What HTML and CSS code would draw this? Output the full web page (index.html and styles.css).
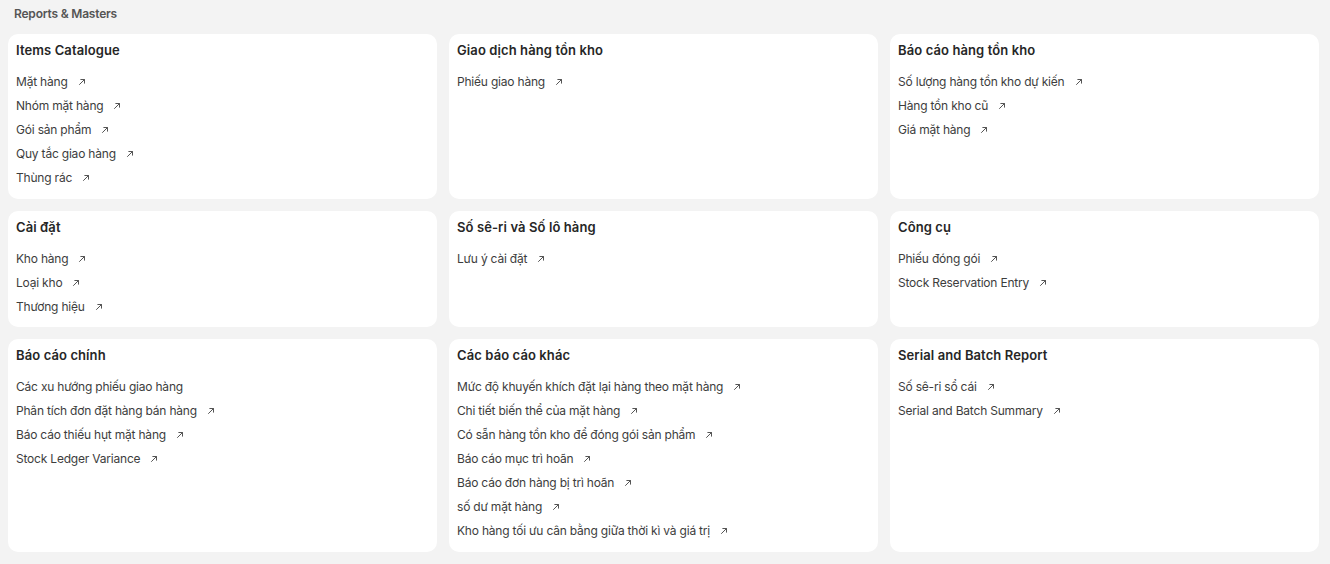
FILE: index.html
```html
<!DOCTYPE html>
<html lang="vi">
  <head>
    <meta charset="utf-8">
    <title>Reports &amp; Masters</title>
    <link rel="stylesheet" href="styles.css">
  </head>
  <body>
    <div class="section">
      <div class="section__title">Reports &amp; Masters</div>
      <div class="cards">
        <div class="card">
          <div class="card__title">Items Catalogue</div>
          <a class="link">Mặt hàng <svg class="arrow" viewBox="0 0 8 8"><path d="M1.5 6.5 L6.5 1.5 M2.8 1.5 H6.5 V5.2"/></svg></a>
          <a class="link">Nhóm mặt hàng <svg class="arrow" viewBox="0 0 8 8"><path d="M1.5 6.5 L6.5 1.5 M2.8 1.5 H6.5 V5.2"/></svg></a>
          <a class="link">Gói sản phẩm <svg class="arrow" viewBox="0 0 8 8"><path d="M1.5 6.5 L6.5 1.5 M2.8 1.5 H6.5 V5.2"/></svg></a>
          <a class="link">Quy tắc giao hàng <svg class="arrow" viewBox="0 0 8 8"><path d="M1.5 6.5 L6.5 1.5 M2.8 1.5 H6.5 V5.2"/></svg></a>
          <a class="link">Thùng rác <svg class="arrow" viewBox="0 0 8 8"><path d="M1.5 6.5 L6.5 1.5 M2.8 1.5 H6.5 V5.2"/></svg></a>
        </div>
        <div class="card">
          <div class="card__title">Giao dịch hàng tồn kho</div>
          <a class="link">Phiếu giao hàng <svg class="arrow" viewBox="0 0 8 8"><path d="M1.5 6.5 L6.5 1.5 M2.8 1.5 H6.5 V5.2"/></svg></a>
        </div>
        <div class="card">
          <div class="card__title">Báo cáo hàng tồn kho</div>
          <a class="link">Số lượng hàng tồn kho dự kiến <svg class="arrow" viewBox="0 0 8 8"><path d="M1.5 6.5 L6.5 1.5 M2.8 1.5 H6.5 V5.2"/></svg></a>
          <a class="link">Hàng tồn kho cũ <svg class="arrow" viewBox="0 0 8 8"><path d="M1.5 6.5 L6.5 1.5 M2.8 1.5 H6.5 V5.2"/></svg></a>
          <a class="link">Giá mặt hàng <svg class="arrow" viewBox="0 0 8 8"><path d="M1.5 6.5 L6.5 1.5 M2.8 1.5 H6.5 V5.2"/></svg></a>
        </div>
        <div class="card">
          <div class="card__title">Cài đặt</div>
          <a class="link">Kho hàng <svg class="arrow" viewBox="0 0 8 8"><path d="M1.5 6.5 L6.5 1.5 M2.8 1.5 H6.5 V5.2"/></svg></a>
          <a class="link">Loại kho <svg class="arrow" viewBox="0 0 8 8"><path d="M1.5 6.5 L6.5 1.5 M2.8 1.5 H6.5 V5.2"/></svg></a>
          <a class="link">Thương hiệu <svg class="arrow" viewBox="0 0 8 8"><path d="M1.5 6.5 L6.5 1.5 M2.8 1.5 H6.5 V5.2"/></svg></a>
        </div>
        <div class="card">
          <div class="card__title">Số sê-ri và Số lô hàng</div>
          <a class="link">Lưu ý cài đặt <svg class="arrow" viewBox="0 0 8 8"><path d="M1.5 6.5 L6.5 1.5 M2.8 1.5 H6.5 V5.2"/></svg></a>
        </div>
        <div class="card">
          <div class="card__title">Công cụ</div>
          <a class="link">Phiếu đóng gói <svg class="arrow" viewBox="0 0 8 8"><path d="M1.5 6.5 L6.5 1.5 M2.8 1.5 H6.5 V5.2"/></svg></a>
          <a class="link">Stock Reservation Entry <svg class="arrow" viewBox="0 0 8 8"><path d="M1.5 6.5 L6.5 1.5 M2.8 1.5 H6.5 V5.2"/></svg></a>
        </div>
        <div class="card">
          <div class="card__title">Báo cáo chính</div>
          <a class="link">Các xu hướng phiếu giao hàng</a>
          <a class="link">Phân tích đơn đặt hàng bán hàng <svg class="arrow" viewBox="0 0 8 8"><path d="M1.5 6.5 L6.5 1.5 M2.8 1.5 H6.5 V5.2"/></svg></a>
          <a class="link">Báo cáo thiếu hụt mặt hàng <svg class="arrow" viewBox="0 0 8 8"><path d="M1.5 6.5 L6.5 1.5 M2.8 1.5 H6.5 V5.2"/></svg></a>
          <a class="link">Stock Ledger Variance <svg class="arrow" viewBox="0 0 8 8"><path d="M1.5 6.5 L6.5 1.5 M2.8 1.5 H6.5 V5.2"/></svg></a>
        </div>
        <div class="card">
          <div class="card__title">Các báo cáo khác</div>
          <a class="link">Mức độ khuyến khích đặt lại hàng theo mặt hàng <svg class="arrow" viewBox="0 0 8 8"><path d="M1.5 6.5 L6.5 1.5 M2.8 1.5 H6.5 V5.2"/></svg></a>
          <a class="link">Chi tiết biến thể của mặt hàng <svg class="arrow" viewBox="0 0 8 8"><path d="M1.5 6.5 L6.5 1.5 M2.8 1.5 H6.5 V5.2"/></svg></a>
          <a class="link">Có sẵn hàng tồn kho để đóng gói sản phẩm <svg class="arrow" viewBox="0 0 8 8"><path d="M1.5 6.5 L6.5 1.5 M2.8 1.5 H6.5 V5.2"/></svg></a>
          <a class="link">Báo cáo mục trì hoãn <svg class="arrow" viewBox="0 0 8 8"><path d="M1.5 6.5 L6.5 1.5 M2.8 1.5 H6.5 V5.2"/></svg></a>
          <a class="link">Báo cáo đơn hàng bị trì hoãn <svg class="arrow" viewBox="0 0 8 8"><path d="M1.5 6.5 L6.5 1.5 M2.8 1.5 H6.5 V5.2"/></svg></a>
          <a class="link">số dư mặt hàng <svg class="arrow" viewBox="0 0 8 8"><path d="M1.5 6.5 L6.5 1.5 M2.8 1.5 H6.5 V5.2"/></svg></a>
          <a class="link">Kho hàng tối ưu cân bằng giữa thời kì và giá trị <svg class="arrow" viewBox="0 0 8 8"><path d="M1.5 6.5 L6.5 1.5 M2.8 1.5 H6.5 V5.2"/></svg></a>
        </div>
        <div class="card">
          <div class="card__title">Serial and Batch Report</div>
          <a class="link">Số sê-ri sổ cái <svg class="arrow" viewBox="0 0 8 8"><path d="M1.5 6.5 L6.5 1.5 M2.8 1.5 H6.5 V5.2"/></svg></a>
          <a class="link">Serial and Batch Summary <svg class="arrow" viewBox="0 0 8 8"><path d="M1.5 6.5 L6.5 1.5 M2.8 1.5 H6.5 V5.2"/></svg></a>
        </div>
      </div>
    </div>
  </body>
</html>
```

FILE: styles.css
```css
*, *::after, *::before {
  margin: 0;
  padding: 0;
  box-sizing: border-box;
}
body {
  background-color: #f3f3f3;
  font-family: Inter, "Noto Sans", sans-serif;
  color: #383838;
}
.section {
  padding: 6px 11px 13px 8px;
}
.section__title {
  padding-left: 6px;
  font-size: 12px;
  line-height: 16px;
  font-weight: 600;
  letter-spacing: -0.2px;
  color: #555;
}
.cards {
  display: grid;
  grid-template-columns: repeat(3, 1fr);
  gap: 12px;
  margin-top: 12px;
}
.card {
  display: flex;
  flex-direction: column;
  align-items: flex-start;
  padding: 6px 8px 8.5px;
  background-color: #fff;
  border-radius: 10px;
}
.card__title {
  font-size: 13px;
  line-height: 20px;
  font-weight: 600;
  letter-spacing: 0.1px;
  color: #262626;
  margin-bottom: 10px;
}
.link {
  display: flex;
  align-items: center;
  gap: 10px;
  font-size: 12px;
  line-height: 24px;
  letter-spacing: -0.2px;
  color: #3d3d3d;
  cursor: pointer;
}
.arrow {
  width: 8px;
  height: 8px;
  fill: none;
  stroke: #555;
  stroke-width: 1;
  stroke-linecap: round;
  stroke-linejoin: round;
}
```
